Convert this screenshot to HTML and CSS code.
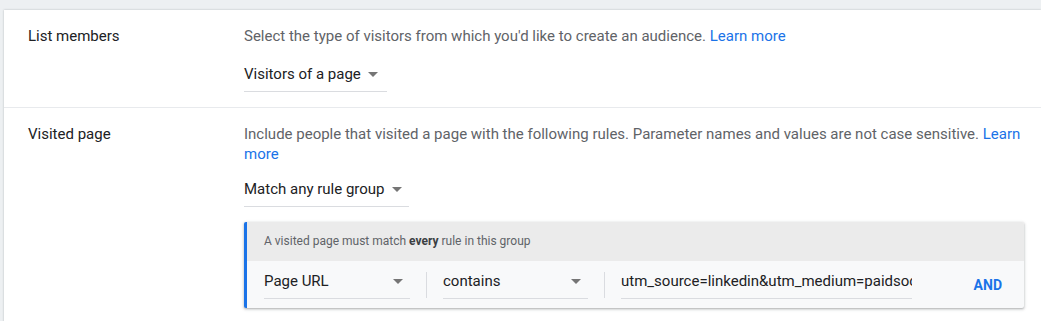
FILE: index.html
```html
<!DOCTYPE html>
<html lang="en">
<head>
  <meta charset="UTF-8">
  <title>Audience rules</title>
  <link rel="stylesheet" href="styles.css">
</head>
<body>
  <div class="card">
    <div class="section">
      <div class="label">List members</div>
      <div class="field">
        <div class="desc">Select the type of visitors from which you'd like to create an audience. <a href="#" class="link">Learn more</a></div>
        <div class="select select-first">
          <span>Visitors of a page</span>
          <span class="arrow"><svg width="10" height="5" viewBox="0 0 10 5"><path d="M0 0l5 5 5-5z" fill="#757575"/></svg></span>
        </div>
      </div>
    </div>

    <div class="section divided">
      <div class="label">Visited page</div>
      <div class="field">
        <div class="desc">Include people that visited a page with the following rules. Parameter names and values are not case sensitive. <a href="#" class="link">Learn more</a></div>
        <div class="select">
          <span>Match any rule group</span>
          <span class="arrow"><svg width="10" height="5" viewBox="0 0 10 5"><path d="M0 0l5 5 5-5z" fill="#757575"/></svg></span>
        </div>

        <div class="rule-group">
          <div class="rule-head">A visited page must match <b>every</b> rule in this group</div>
          <div class="rule-row">
            <div class="select rule-select">
              <span>Page URL</span>
              <span class="arrow"><svg width="10" height="5" viewBox="0 0 10 5"><path d="M0 0l5 5 5-5z" fill="#757575"/></svg></span>
            </div>
            <div class="sep"></div>
            <div class="select rule-select narrow">
              <span>contains</span>
              <span class="arrow"><svg width="10" height="5" viewBox="0 0 10 5"><path d="M0 0l5 5 5-5z" fill="#757575"/></svg></span>
            </div>
            <div class="sep"></div>
            <div class="value">utm_source=linkedin&amp;utm_medium=paidsocial</div>
            <button class="and-btn">AND</button>
          </div>
        </div>
      </div>
    </div>
  </div>
</body>
</html>
```

FILE: styles.css
```css
/* General Styles */
body {
  margin: 0;
  background: #edf0f2;
  font-family: Roboto, 'Liberation Sans', sans-serif;
  color: #202124;
}

.card {
  margin: 10px 0 0 4px;
  background: #fff;
  box-shadow: 0 0 2px rgba(60, 64, 67, 0.3);
  min-height: 320px;
}

.section {
  display: grid;
  grid-template-columns: 216px 1fr;
  padding: 16px 17px 15px 24px;
}

.section.divided {
  border-top: 1px solid #e8eaed;
}

.label {
  font-size: 15px;
  line-height: 20px;
  color: #202124;
}

.desc {
  font-size: 15px;
  line-height: 20px;
  color: #5f6368;
}

.link {
  color: #1a73e8;
  text-decoration: none;
}

/* Dropdowns */
.select {
  display: flex;
  width: fit-content;
  margin-top: 15px;
  padding-bottom: 7px;
  border-bottom: 1px solid #dadce0;
  font-size: 15px;
  line-height: 20px;
  color: #202124;
}

.select-first {
  margin-top: 18px;
  padding-right: 2px;
}

.arrow {
  display: flex;
  justify-content: center;
  width: 24px;
  padding-top: 8px;
  height: 12px;
}

.arrow svg {
  display: block;
}

/* Rule group box */
.rule-group {
  margin-top: 15px;
  border-left: 3px solid #1a73e8;
  border-radius: 2px;
  background: #f8f9fa;
  box-shadow: 0 1px 2px rgba(60, 64, 67, 0.3), 0 1px 3px 1px rgba(60, 64, 67, 0.12);
  overflow: hidden;
}

.rule-head {
  padding: 0 17px;
  line-height: 39px;
  font-size: 12px;
  color: #5f6368;
  background: #ebebeb;
}

.rule-head b {
  color: #3c4043;
}

.rule-row {
  display: flex;
  align-items: center;
  padding: 10px 22px 9px 17px;
}

.rule-select {
  margin-top: 0;
  width: 146px;
  justify-content: space-between;
}

.rule-select.narrow {
  width: 145px;
}

.sep {
  width: 1px;
  height: 26px;
  margin: 0 16px;
  background: #dadce0;
}

.value {
  width: 291px;
  padding-bottom: 7px;
  border-bottom: 1px solid #dadce0;
  font-size: 15px;
  line-height: 20px;
  white-space: nowrap;
  overflow: hidden;
  color: #202124;
}

.and-btn {
  margin-left: auto;
  padding: 0;
  border: none;
  background: none;
  font-family: inherit;
  font-size: 14px;
  font-weight: 700;
  color: #1a73e8;
  cursor: pointer;
}
```
